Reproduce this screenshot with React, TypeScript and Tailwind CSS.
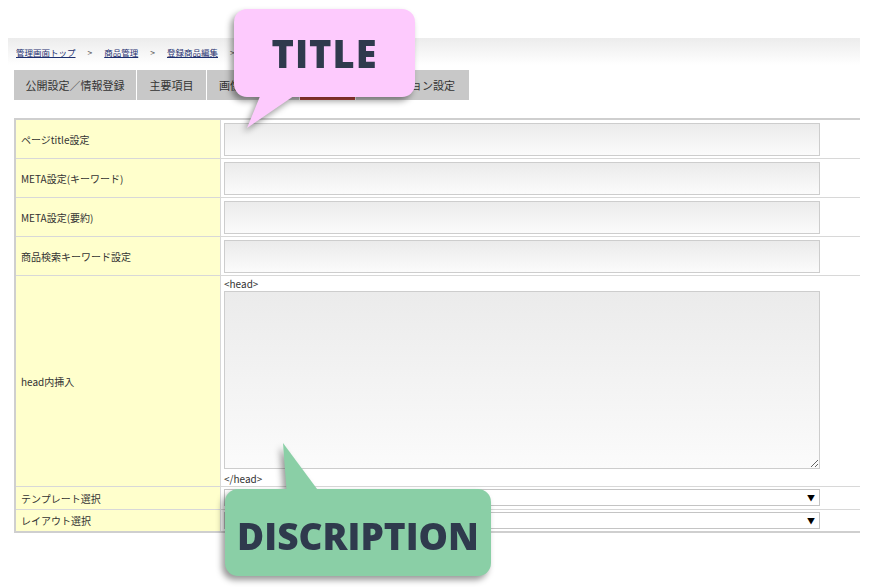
import React from 'react';

const jp = { fontFamily: '"Noto Sans CJK JP", "Noto Sans", sans-serif' };
const bubbleFont = { fontFamily: '"Open Sans", "Noto Sans", sans-serif' };

const crumbs = ['管理画面トップ', '商品管理', '登録商品編集'];

const tabs = [
  { label: '公開設定／情報登録', w: 'w-[122px] justify-center' },
  { label: '主要項目', w: 'w-[69px] justify-center' },
  { label: '画像設定', w: 'w-[92px] pl-3' },
  { label: '', w: 'w-[55px]', active: true },
  { label: 'オプション設定', w: 'w-[113px] justify-end pr-[14px]' },
];

const inputRows = ['ページtitle設定', 'META設定(キーワード)', 'META設定(要約)', '商品検索キーワード設定'];

const FakeSelect = () => (
  <div className="flex h-[17px] w-[596px] items-center justify-end border border-[#c4c4c4] bg-white pr-[4px] text-[8px] text-black">
    ▼
  </div>
);

// 吹き出し（説明用オーバーレイ）
const TitleBubble = () => (
  <div className="absolute left-[234px] top-[9px] h-[88px] w-[181px] drop-shadow-[-3px_4px_3px_rgba(0,0,0,0.4)]">
    <svg className="absolute left-0 top-0 overflow-visible" width="181" height="120">
      <polygon points="29,80 70,80 13,119" fill="#fdcafd" />
    </svg>
    <div
      className="relative flex h-full w-full items-center justify-center rounded-[13px] bg-[#fdcafd] text-[38px] font-extrabold tracking-[1px] text-[#2f3a4d]"
      style={bubbleFont}
    >
      TITLE
    </div>
  </div>
);

const DescBubble = () => (
  <div className="absolute left-[225px] top-[489px] h-[87px] w-[266px] drop-shadow-[-3px_4px_3px_rgba(0,0,0,0.4)]">
    <svg className="absolute left-0 top-[-50px] overflow-visible" width="120" height="60">
      <polygon points="58,4 62,58 98,58" fill="#8acfa6" />
    </svg>
    <div
      className="relative flex h-full w-full items-center justify-center rounded-[13px] bg-[#8acfa6] pt-[6px] text-[37px] font-extrabold text-[#2f3a4d]"
      style={bubbleFont}
    >
      DISCRIPTION
    </div>
  </div>
);

export default function App() {
  return (
    <div className="relative h-[588px] w-[890px] overflow-hidden bg-white text-[#333]" style={jp}>
      <div className="pl-2 pt-[38px]">
        {/* パンくず */}
        <div className="flex h-[27px] w-[852px] items-center bg-linear-to-b from-[#ececec] to-white pl-2 pt-[2px] text-[8.5px]">
          {crumbs.map((c) => (
            <React.Fragment key={c}>
              <span className="text-[#1d2f6f] underline">{c}</span>
              <span className="mx-[12px] text-[#555]">&gt;</span>
            </React.Fragment>
          ))}
        </div>

        {/* タブ */}
        <div className="ml-[6px] mt-[5px] flex gap-px">
          {tabs.map((t, i) => (
            <div
              key={i}
              className={`flex h-[30px] items-center text-[11px] ${t.w} ${
                t.active ? 'bg-[#b4453b] text-white' : 'bg-[#c8c8c8] text-[#333]'
              }`}
            >
              {t.label}
            </div>
          ))}
        </div>

        {/* 設定テーブル */}
        <div className="ml-[6px] mt-[18px] w-[846px] border-b-2 border-l-2 border-t-2 border-[#cfcfcf] text-[10px]">
          {inputRows.map((label) => (
            <div key={label} className="grid h-[39px] grid-cols-[205px_1fr] border-b border-[#d8d8d8]">
              <div className="flex items-center border-r border-[#d8d8d8] bg-[#ffffcc] pl-[5px]">{label}</div>
              <div className="pl-[3px] pt-[3px]">
                <input
                  className="h-[33px] w-[596px] border border-[#cdcdcd] bg-linear-to-b from-[#ebebeb] to-[#fbfbfb] outline-none"
                  readOnly
                />
              </div>
            </div>
          ))}

          <div className="grid h-[211px] grid-cols-[205px_1fr] border-b border-[#d8d8d8]">
            <div className="flex items-center border-r border-[#d8d8d8] bg-[#ffffcc] pl-[5px]">head内挿入</div>
            <div className="flex flex-col pl-[3px]">
              <div className="h-[15px] pt-[2px] leading-[12px]">&lt;head&gt;</div>
              <textarea
                className="block h-[178px] w-[596px] border border-[#cdcdcd] bg-linear-to-b from-[#ebebeb] to-[#fbfbfb] outline-none"
                readOnly
              />
              <div className="pt-[4px] leading-[12px]">&lt;/head&gt;</div>
            </div>
          </div>

          <div className="grid h-[23px] grid-cols-[205px_1fr] border-b border-[#d8d8d8]">
            <div className="flex items-center border-r border-[#d8d8d8] bg-[#ffffcc] pl-[5px]">テンプレート選択</div>
            <div className="pl-[3px] pt-[2px]">
              <FakeSelect />
            </div>
          </div>

          <div className="grid h-[21px] grid-cols-[205px_1fr]">
            <div className="flex items-center border-r border-[#d8d8d8] bg-[#ffffcc] pl-[5px]">レイアウト選択</div>
            <div className="pl-[3px] pt-[2px]">
              <FakeSelect />
            </div>
          </div>
        </div>
      </div>

      <TitleBubble />
      <DescBubble />
    </div>
  );
}
